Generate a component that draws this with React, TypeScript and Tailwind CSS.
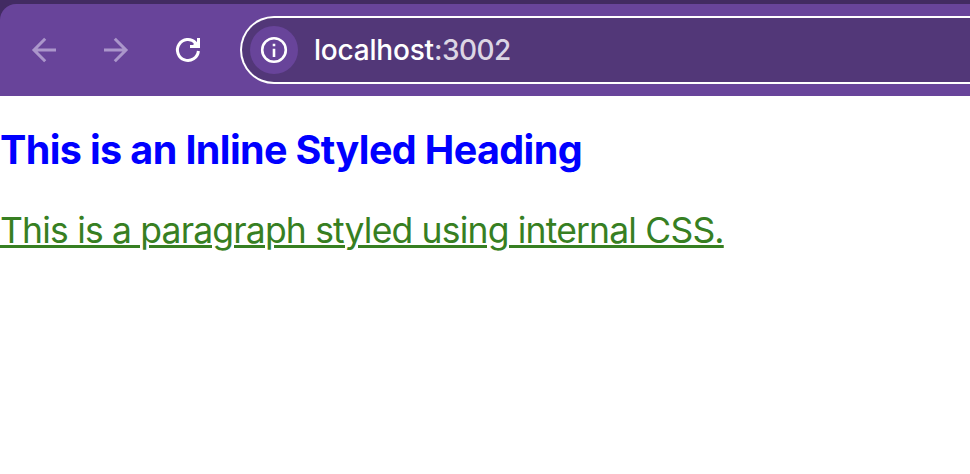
function BackIcon() {
  return (
    <svg className="size-8" viewBox="0 0 32 32" fill="none" stroke="#ab96cb" strokeWidth="3">
      <path d="M28 16H6M17.2 4.8L6 16l11.2 11.2" />
    </svg>
  );
}

function ForwardIcon() {
  return (
    <svg className="size-8" viewBox="0 0 32 32" fill="none" stroke="#ab96cb" strokeWidth="3">
      <path d="M4 16h22M14.8 4.8L26 16 14.8 27.2" />
    </svg>
  );
}

function ReloadIcon() {
  return (
    <svg className="size-8" viewBox="0 0 32 32" fill="none" stroke="#fff" strokeWidth="3">
      <path d="M26.4 17A10.5 10.5 0 1 1 23.5 8.7L26 11.5" />
      <path d="M26.5 4v8.5H18M22 9l4 3" />
    </svg>
  );
}

function InfoIcon() {
  return (
    <svg className="size-8" viewBox="0 0 32 32" fill="none" stroke="#fff" strokeWidth="2.6">
      <circle cx="16" cy="16" r="11.8" />
      <path d="M16 14.7V23M16 9.8V12.2" />
    </svg>
  );
}

export default function App() {
  return (
    <div className="h-[474px] w-full overflow-hidden bg-white font-['Inter',sans-serif]">
      <div className="h-24 bg-[#422b62] pt-1">
        <header className="flex h-[92px] items-center rounded-tl-[16px] bg-[#68449a]">
          <nav className="flex w-60 shrink-0 gap-10 pl-7">
            <button aria-label="Back"><BackIcon /></button>
            <button aria-label="Forward"><ForwardIcon /></button>
            <button aria-label="Reload"><ReloadIcon /></button>
          </nav>
          <div className="flex h-[68px] flex-1 items-center rounded-l-full border-2 border-r-0 border-white bg-[#523778] pl-2">
            <div className="flex size-12 items-center justify-center rounded-full bg-[#68449a]">
              <InfoIcon />
            </div>
            <div className="pl-4 text-[28px] leading-8 font-medium tracking-[-0.2px] text-white">
              localhost<span className="tracking-[-0.5px] text-[#dcd6e4]">:3002</span>
            </div>
          </div>
        </header>
      </div>
      <main className="pt-[30px]">
        <h1 className="text-[39.5px] leading-[48px] font-bold tracking-[-0.62px] whitespace-nowrap text-[#0000ff]">
          This is an Inline Styled Heading
        </h1>
        <p className="mt-[35px] text-[35.5px] leading-[44px] tracking-[-0.82px] whitespace-nowrap text-[#377f22]">
          <span className="underline decoration-[3px] underline-offset-[2px]">
            This is a paragraph styled using internal CSS.
          </span>
        </p>
      </main>
    </div>
  );
}
